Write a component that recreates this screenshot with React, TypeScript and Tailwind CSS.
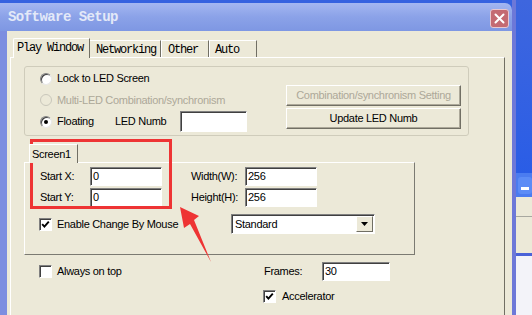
import React from "react";

const sans = { fontFamily: '"Liberation Sans", Arial, sans-serif' };
const mono = { fontFamily: '"Liberation Mono", "Courier New", monospace' };

function Radio({ checked, disabled }: { checked?: boolean; disabled?: boolean }) {
  return (
    <span
      className={
        disabled
          ? "w-[12px] h-[12px] rounded-full shrink-0 border border-[#c9c7bb] bg-[#ece9d8] flex items-center justify-center"
          : "w-[12px] h-[12px] rounded-full shrink-0 border border-t-[#808080] border-l-[#808080] border-r-[#e8e8e8] border-b-[#e8e8e8] bg-white shadow-[inset_1px_1px_0_#404040] flex items-center justify-center"
      }
    >
      {checked && <span className="w-[4px] h-[4px] rounded-full bg-black" />}
    </span>
  );
}

function Check({ checked }: { checked?: boolean }) {
  return (
    <span className="w-[13px] h-[13px] shrink-0 bg-white border border-t-[#808080] border-l-[#808080] border-r-white border-b-white shadow-[inset_1px_1px_0_#404040] flex items-center justify-center">
      {checked && (
        <svg width="9" height="9" viewBox="0 0 9 9">
          <path d="M1.2 4.2 L3.4 6.6 L7.8 1.6" stroke="#000" strokeWidth="1.9" fill="none" />
        </svg>
      )}
    </span>
  );
}

function Edit({ className, value }: { className: string; value?: string }) {
  return (
    <div
      className={
        "bg-white border border-t-[#808080] border-l-[#808080] border-r-white border-b-white shadow-[inset_1px_1px_0_#404040] flex items-center pl-[2px] text-black " +
        className
      }
    >
      {value}
    </div>
  );
}

function Button({ children, disabled }: { children: React.ReactNode; disabled?: boolean }) {
  return (
    <div
      className={
        disabled
          ? "w-[175px] h-[21px] bg-[#ece9d8] border border-t-white border-l-white border-r-[#716f64] border-b-[#716f64] shadow-[inset_-1px_-1px_0_#aca899] flex items-center justify-center text-[#aca899]"
          : "w-[175px] h-[21px] bg-[#ece9d8] border border-t-white border-l-white border-r-[#716f64] border-b-[#716f64] shadow-[inset_-1px_-1px_0_#aca899] flex items-center justify-center text-black"
      }
    >
      {children}
    </div>
  );
}

export default function App() {
  return (
    <div className="relative w-[532px] h-[315px] overflow-hidden flex bg-[#3562e0]" style={sans}>
      {/* Window */}
      <div className="w-[512px] h-full flex flex-col">
        {/* title bar */}
        <div className="mt-[3px] h-[28px] shrink-0 rounded-tr-[7px] bg-gradient-to-b from-[#a4b7f1] via-[#8ba2e8] to-[#7e97e3] flex items-center pl-[8px] pr-[3px]">
          <span
            className="text-[14px] font-bold text-[#e3e9f8] tracking-[-0.55px] leading-none"
            style={mono}
          >
            Software Setup
          </span>
          <div className="ml-auto mt-[2px] w-[19px] h-[19px] rounded-[3px] bg-[#c46a72] border border-[#e8c8d0] flex items-center justify-center">
            <svg width="11" height="11" viewBox="0 0 11 11">
              <path d="M1.5 1.5 L9.5 9.5 M9.5 1.5 L1.5 9.5" stroke="#fff" strokeWidth="2" strokeLinecap="round" />
            </svg>
          </div>
        </div>
        {/* body */}
        <div className="flex-1 flex">
          <div className="w-[7px] bg-[#7d8ee0]" />
          <div className="flex-1 bg-[#ece9d8] pt-[7px] flex flex-col text-[11px] tracking-[-0.3px] text-black">
            {/* tabs */}
            <div className="h-[19px] pl-[6px] flex items-end" style={mono}>
              <div className="relative z-10 w-[77px] h-[20px] -mb-[1px] bg-[#ece9d8] border-t border-l border-r border-t-white border-l-white border-r-[#716f64] rounded-tl-[2px] pl-[3px] pt-[2px] text-[12px] tracking-[-1.2px] leading-[14px]">
                Play Window
              </div>
              <div className="w-[71px] h-[17px] border-t border-r border-t-white border-r-[#716f64] pl-[6px] pt-[2px] text-[12px] tracking-[-1.2px] leading-[14px]">
                Networking
              </div>
              <div className="w-[48px] h-[17px] border-t border-l border-r border-t-white border-l-white border-r-[#716f64] pl-[6px] pt-[2px] text-[12px] tracking-[-1.2px] leading-[14px]">
                Other
              </div>
              <div className="w-[48px] h-[17px] border-t border-l border-r border-t-white border-l-white border-r-[#716f64] pl-[5px] pt-[2px] text-[12px] tracking-[-1.2px] leading-[14px]">
                Auto
              </div>
            </div>
            {/* panel */}
            <div className="ml-[3px] w-[495px] flex-1 border-t border-l border-r border-t-white border-l-white border-r-[#716f64] pl-[13px] pt-[8px] flex flex-col">
              {/* group box */}
              <div className="w-[445px] h-[70px] border border-[#cfccbb] rounded-[3px] flex">
                <div className="pl-[15px] pt-[1px] flex flex-col">
                  <div className="h-[21px] flex items-center gap-[5px]">
                    <Radio />
                    <span>Lock to LED Screen</span>
                  </div>
                  <div className="h-[22px] flex items-center gap-[5px]">
                    <Radio disabled />
                    <span className="text-[#aca899]">Multi-LED Combination/synchronism</span>
                  </div>
                  <div className="h-[21px] flex items-center">
                    <Radio checked />
                    <span className="ml-[5px] w-[58px]">Floating</span>
                    <span className="w-[65px]">LED Numb</span>
                    <Edit className="w-[67px] h-[21px]" />
                  </div>
                </div>
                <div className="ml-auto mr-[7px] pt-[18px] flex flex-col gap-[2px]">
                  <Button disabled>Combination/synchronism Setting</Button>
                  <Button>Update LED Numb</Button>
                </div>
              </div>
              {/* screen section */}
              <div className="mt-[8px] flex flex-col">
                <div className="relative z-10 ml-[5px] w-[49px] h-[19px] -mb-[1px] bg-[#ece9d8] border-t border-l border-r border-t-white border-l-white border-r-[#716f64] pl-[2px] flex items-center">
                  Screen1
                </div>
                <div className="w-[391px] h-[93px] border border-t-white border-l-white border-r-[#7b7a72] border-b-[#7b7a72] pt-[4px] flex flex-col">
                  <div className="h-[19px] pl-[15px] flex items-center">
                    <span className="w-[50px]">Start X:</span>
                    <Edit className="w-[72px] h-[19px]" value="0" />
                    <span className="w-[29px]" />
                    <span className="w-[54px]">Width(W):</span>
                    <Edit className="w-[72px] h-[19px]" value="256" />
                  </div>
                  <div className="mt-[2px] h-[19px] pl-[15px] flex items-center">
                    <span className="w-[50px]">Start Y:</span>
                    <Edit className="w-[72px] h-[19px]" value="0" />
                    <span className="w-[29px]" />
                    <span className="w-[54px]">Height(H):</span>
                    <Edit className="w-[72px] h-[19px]" value="256" />
                  </div>
                  <div className="mt-[7px] h-[20px] pl-[14px] flex items-center">
                    <div className="w-[192px] flex items-center gap-[5px]">
                      <Check checked />
                      <span>Enable Change By Mouse</span>
                    </div>
                    <div className="w-[144px] h-[20px] bg-white border border-t-[#808080] border-l-[#808080] border-r-white border-b-white shadow-[inset_1px_1px_0_#404040] flex items-center pl-[3px] pr-[1px]">
                      <span className="flex-1">Standard</span>
                      <div className="w-[17px] h-[16px] bg-[#ece9d8] border border-t-white border-l-white border-r-[#716f64] border-b-[#716f64] flex items-center justify-center">
                        <svg width="7" height="4" viewBox="0 0 7 4">
                          <path d="M0 0 H7 L3.5 4 Z" fill="#000" />
                        </svg>
                      </div>
                    </div>
                  </div>
                </div>
              </div>
              {/* bottom rows */}
              <div className="mt-[7px] h-[19px] pl-[15px] flex items-center">
                <div className="w-[225px] flex items-center gap-[5px]">
                  <Check />
                  <span>Always on top</span>
                </div>
                <span className="w-[58px]">Frames:</span>
                <Edit className="w-[68px] h-[19px]" value="30" />
              </div>
              <div className="mt-[9px] h-[13px] pl-[239px] flex items-center gap-[6px]">
                <Check checked />
                <span>Accelerator</span>
              </div>
            </div>
          </div>
        </div>
      </div>
      {/* right strip: desktop & another window */}
      <div className="w-[20px] h-full flex">
        <div className="w-[4px] h-full bg-[#6d78d8]" />
        <div className="flex-1 flex flex-col">
          <div className="h-[173px] bg-gradient-to-b from-[#3e66de] to-[#2a5de6]" />
          <div className="h-[24px] bg-[#4b7cf0] pl-[2px] flex items-center">
            <div className="w-[14px] h-[17px] rounded-[3px] bg-[#5c8cf6] flex items-end pb-[4px] pl-[3px]">
              <span className="w-[8px] h-[3px] bg-white" />
            </div>
          </div>
          <div className="h-[20px] bg-[#ece9d8] border-b border-[#a8a8a0]" />
          <div className="h-[36px] bg-[#ece9d8]" />
          <div className="h-[3px] bg-[#4a62d8]" />
          <div className="flex-1 bg-[#f3f3f9]" />
        </div>
      </div>

      {/* annotation overlays */}
      <div className="absolute left-[30px] top-[139px] w-[142px] h-[70px] border-[3px] border-[#ee3434]" />
      <svg className="absolute left-0 top-0" width="532" height="315" viewBox="0 0 532 315">
        <polygon points="180,207 199,216 194,220 211,262 190,224 184,228" fill="#ee3434" />
      </svg>
    </div>
  );
}
